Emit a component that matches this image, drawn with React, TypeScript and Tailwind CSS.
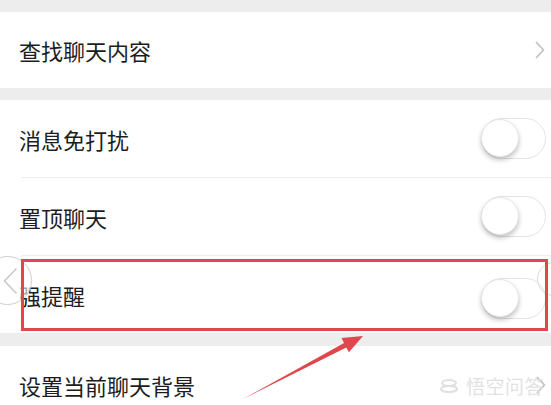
import React from 'react';

const Toggle = () => (
  <div className="relative w-[65px] h-[41px] rounded-full border-[1.5px] border-[#e3e3e3] bg-white">
    <div className="absolute left-[-1px] top-[0px] w-[38px] h-[38px] rounded-full bg-white border border-[#e6e6e6] shadow-[0_3px_5px_rgba(0,0,0,0.24)]" />
  </div>
);

const Chevron = () => (
  <svg width="10" height="18" viewBox="0 0 10 18" className="shrink-0">
    <path d="M1.5 1.5 L8.5 9 L1.5 16.5" fill="none" stroke="#c2c2c2" strokeWidth="1.8" strokeLinecap="round" strokeLinejoin="round" />
  </svg>
);

const Row = ({ label, right, h = 'h-[77px]' }: { label: string; right: React.ReactNode; h?: string }) => (
  <div className={`${h} bg-white flex items-center justify-between pl-[19px]`}>
    <span className="text-[22px] text-[#1d1d1d] leading-none">{label}</span>
    {right}
  </div>
);

const Divider = () => (
  <div className="bg-white">
    <div className="ml-[22px] h-px bg-[#ececec]" />
  </div>
);

export default function App() {
  return (
    <div
      className="relative w-[551px] h-[405px] overflow-hidden bg-[#ededed]"
      style={{ fontFamily: '"Noto Sans CJK SC", "Noto Sans", sans-serif' }}
    >
      <div className="pt-[12px]">
        <Row label="查找聊天内容" h="h-[76px]" right={<div className="pr-[6px]"><Chevron /></div>} />
      </div>
      <div className="pt-[12px]">
        <Row label="消息免打扰" right={<div className="pr-[5px]"><Toggle /></div>} />
        <Divider />
        <Row label="置顶聊天" right={<div className="pr-[5px]"><Toggle /></div>} />
        <Divider />
        <Row label="强提醒" right={<div className="pr-[5px] pt-[8px]"><Toggle /></div>} />
      </div>
      <div className="pt-[13px]">
        <Row label="设置当前聊天背景" h="h-[78px]" right={<div className="pr-[5px]"><Chevron /></div>} />
      </div>

      {/* back / forward overlay circles */}
      <div className="absolute left-[-17px] top-[256px] w-[49px] h-[49px] rounded-full border-[1.5px] border-[#cfcfcf] bg-white/60 flex items-center justify-end pr-[14px]">
        <svg width="14" height="26" viewBox="0 0 14 26">
          <path d="M13 1 L1.5 13 L13 25" fill="none" stroke="#c8c8c8" strokeWidth="1.6" strokeLinecap="round" strokeLinejoin="round" />
        </svg>
      </div>
      <div className="absolute left-[537px] top-[262px] w-[34px] h-[34px] rounded-full border border-[#dadada]" />

      {/* annotation frame */}
      <div className="absolute left-[21px] top-[259px] w-[527px] h-[72px] border-[3px] border-[#e0474c]" />

      {/* annotation arrow */}
      <svg className="absolute left-0 top-0" width="551" height="405" viewBox="0 0 551 405">
        <polygon
          points="243,399 344.1,343 341.5,338.1 363,336 348.9,352.3 346.3,347.4"
          fill="#e0474c"
        />
      </svg>

      {/* watermark */}
      <div className="absolute left-[440px] top-[376px] flex items-center gap-[8px] text-[#e2e2e2]">
        <svg width="18" height="14" viewBox="0 0 18 14">
          <ellipse cx="9" cy="4" rx="7" ry="3" fill="none" stroke="#e0e0e0" strokeWidth="2" />
          <ellipse cx="9" cy="10" rx="8" ry="3" fill="none" stroke="#e0e0e0" strokeWidth="2" />
        </svg>
        <span className="text-[19px] leading-none tracking-[0.5px]">悟空问答</span>
      </div>
    </div>
  );
}
